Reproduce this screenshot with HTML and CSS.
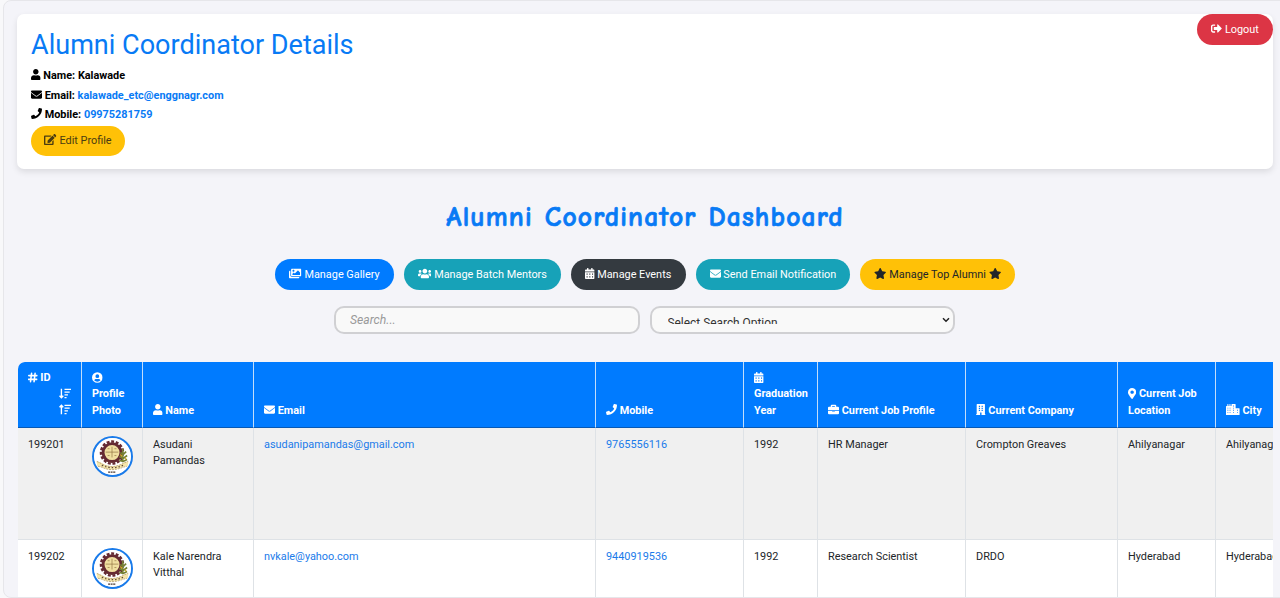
FILE: index.html
```html
<!DOCTYPE html>
<html lang="en">
<head>
<meta charset="utf-8">
<title>Alumni Coordinator Dashboard</title>
<link rel="stylesheet" href="styles.css">
</head>
<body>
<svg class="sprite" aria-hidden="true">
  <symbol id="user" viewBox="0 0 448 512"><path d="M224 256c70.7 0 128-57.3 128-128S294.7 0 224 0 96 57.3 96 128s57.3 128 128 128zm89.6 32h-16.7c-22.2 10.2-46.9 16-72.9 16s-50.6-5.8-72.9-16h-16.7C60.2 288 0 348.2 0 422.4V464c0 26.5 21.5 48 48 48h352c26.5 0 48-21.5 48-48v-41.6c0-74.2-60.2-134.4-134.4-134.4z"/></symbol>
  <symbol id="mail" viewBox="0 0 512 512"><path d="M502.3 190.8c3.9-3.1 9.7-.2 9.7 4.7V400c0 26.5-21.5 48-48 48H48c-26.5 0-48-21.5-48-48V195.6c0-5 5.7-7.8 9.7-4.7 22.4 17.4 52.1 39.5 154.1 113.6 21.1 15.4 56.7 47.8 92.2 47.6 35.7.3 72-32.8 92.3-47.6 102-74.1 131.6-96.3 154-113.7zM256 320c23.2.4 56.6-29.2 73.4-41.4 132.7-96.3 142.8-104.7 173.4-128.7 5.8-4.5 9.2-11.5 9.2-18.9v-19c0-26.5-21.5-48-48-48H48c-26.5 0-48 21.5-48 48v19c0 7.4 3.4 14.3 9.2 18.9 30.6 23.9 40.7 32.4 173.4 128.7 16.8 12.2 50.2 41.8 73.4 41.4z"/></symbol>
  <symbol id="phone" viewBox="0 0 512 512"><path d="M493.4 24.6l-104-24c-11.3-2.6-22.9 3.3-27.5 13.9l-48 112c-4.2 9.8-1.4 21.3 6.9 28l60.6 49.6c-36 76.7-98.9 140.5-177.2 177.2l-49.6-60.6c-6.8-8.3-18.2-11.1-28-6.9l-112 48C3.9 366.5-2 378.1.6 389.4l24 104C27.1 504.2 36.7 512 48 512c256.1 0 464-207.5 464-464 0-11.2-7.7-20.9-18.6-23.4z"/></symbol>
  <symbol id="edit" viewBox="0 0 576 512"><path d="M402.6 83.2l90.2 90.2c3.8 3.8 3.8 10 0 13.8L274.4 405.6l-92.8 10.3c-12.4 1.4-22.9-9.1-21.5-21.5l10.3-92.8L388.8 83.2c3.8-3.8 10-3.8 13.8 0zm162-22.9l-48.8-48.8c-15.2-15.2-39.9-15.2-55.2 0l-35.4 35.4c-3.8 3.8-3.8 10 0 13.8l90.2 90.2c3.8 3.8 10 3.8 13.8 0l35.4-35.4c15.2-15.3 15.2-40 0-55.2zM384 346.2V448H64V128h229.8c3.2 0 6.2-1.3 8.5-3.5l40-40c7.6-7.6 2.2-20.5-8.5-20.5H48C21.5 64 0 85.5 0 112v352c0 26.5 21.5 48 48 48h352c26.5 0 48-21.5 48-48V306.2c0-10.7-12.9-16-20.5-8.5l-40 40c-2.2 2.3-3.5 5.3-3.5 8.5z"/></symbol>
  <symbol id="logout" viewBox="0 0 512 512"><path d="M497 273L329 441c-15 15-41 4.5-41-17v-96H152c-13.3 0-24-10.7-24-24v-96c0-13.3 10.7-24 24-24h136V88c0-21.4 25.9-32 41-17l168 168c9.3 9.4 9.3 24.6 0 34zM192 436v-40c0-6.6-5.4-12-12-12H96c-17.7 0-32-14.3-32-32V160c0-17.7 14.3-32 32-32h84c6.6 0 12-5.4 12-12V76c0-6.6-5.4-12-12-12H96c-53 0-96 43-96 96v192c0 53 43 96 96 96h84c6.6 0 12-5.4 12-12z"/></symbol>
  <symbol id="images" viewBox="0 0 576 512"><path d="M480 416v16c0 26.500-21.500 48-48 48H48c-26.500 0-48-21.500-48-48V176c0-26.500 21.500-48 48-48h16v208c0 44.100 35.900 80 80 80h336zm96-80V80c0-26.500-21.500-48-48-48H144c-26.500 0-48 21.500-48 48v256c0 26.500 21.500 48 48 48h384c26.500 0 48-21.500 48-48zM256 128c0 26.500-21.500 48-48 48s-48-21.500-48-48 21.500-48 48-48 48 21.500 48 48zm-96 144l55.500-55.500c4.700-4.700 12.300-4.700 17 0L272 256l135.500-135.500c4.700-4.700 12.300-4.700 17 0L512 208v112H160v-48z" fill-rule="evenodd"/></symbol>
  <symbol id="users" viewBox="0 0 640 512"><path d="M96 224c35.3 0 64-28.7 64-64s-28.7-64-64-64-64 28.7-64 64 28.7 64 64 64zm448 0c35.3 0 64-28.7 64-64s-28.7-64-64-64-64 28.7-64 64 28.7 64 64 64zm32 32h-64c-17.6 0-33.5 7.1-45.1 18.6 40.3 22.1 68.9 62 75.1 109.4h66c17.7 0 32-14.3 32-32v-32c0-35.3-28.7-64-64-64zm-256 0c61.9 0 112-50.1 112-112S381.9 32 320 32 208 82.1 208 144s50.1 112 112 112zm76.8 32h-8.3c-20.8 10-43.9 16-68.5 16s-47.6-6-68.5-16h-8.3C179.6 288 128 339.6 128 403.2V432c0 26.5 21.5 48 48 48h288c26.5 0 48-21.5 48-48v-28.8c0-63.6-51.6-115.2-115.2-115.2zm-223.7-13.4C161.5 263.1 145.6 256 128 256H64c-35.3 0-64 28.7-64 64v32c0 17.7 14.3 32 32 32h65.9c6.3-47.4 34.9-87.3 75.2-109.4z"/></symbol>
  <symbol id="calendar" viewBox="0 0 448 512"><path fill-rule="evenodd" d="M0 464c0 26.500 21.500 48 48 48h352c26.500 0 48-21.500 48-48V192H0zM72 260h52v52H72zm126 0h52v52h-52zm126 0h52v52h-52zM72 388h52v52H72zm126 0h52v52h-52zm126 0h52v52h-52zM448 160v-48c0-26.500-21.500-48-48-48h-48V16q0-16-16-16h-32q-16 0-16 16v48H160V16q0-16-16-16h-32q-16 0-16 16v48H48C21.500 64 0 85.500 0 112v48z"/></symbol>
  <symbol id="star" viewBox="0 0 576 512"><path d="M259.3 17.8L194 150.2 47.9 171.5c-26.2 3.8-36.7 36.1-17.7 54.6l105.7 103-25 145.5c-4.5 26.3 23.2 46 46.4 33.7L288 439.6l130.7 68.7c23.2 12.2 50.9-7.4 46.4-33.7l-25-145.5 105.7-103c19-18.5 8.5-50.8-17.7-54.6L382 150.2 316.7 17.8c-11.7-23.6-45.6-23.9-57.4 0z"/></symbol>
  <symbol id="hash" viewBox="0 0 448 512"><path d="M166 60L118 452M330 60L282 452M36 168h390M22 344h390" fill="none" stroke="currentColor" stroke-width="72" stroke-linecap="round"/></symbol>
  <symbol id="circle-user" viewBox="0 0 496 512"><path fill-rule="evenodd" d="M248 8a248 248 0 1 0 0 496 248 248 0 1 0 0-496zm0 96a88 88 0 1 1 0 176 88 88 0 1 1 0-176zm0 344c-58.700 0-111.300-26.600-146.500-68.200C120.300 344.400 157 320 200 320c3 0 14 8 48 8s45-8 48-8c43 0 79.700 24.400 98.500 59.800C359.300 421.400 306.700 448 248 448z"/></symbol>
  <symbol id="briefcase" viewBox="0 0 512 512"><path fill-rule="evenodd" d="M128 128V80q0-48 48-48h160q48 0 48 48v48h80q48 0 48 48v112H0V176q0-48 48-48zM192 96v32h128V96zM0 320h192v16q0 16 16 16h96q16 0 16-16v-16h192v112q0 48-48 48H48q-48 0-48-48z"/></symbol>
  <symbol id="building" viewBox="0 0 448 512"><path fill-rule="evenodd" d="M32 24Q32 0 56 0h336q24 0 24 24v452h20q12 0 12 12v24H256v-112h-64v112H0v-24q0-12 12-12h20zM132 80h56v56h-56zm128 0h56v56h-56zM132 176h56v56h-56zm128 0h56v56h-56zM132 272h56v56h-56zm128 0h56v56h-56z"/></symbol>
  <symbol id="pin" viewBox="0 0 384 512"><path d="M172.3 501.7C27 291 0 269.400 0 192 0 86 86 0 192 0s192 86 192 192c0 77.400-27 99-172.300 309.700-9.500 13.700-29.900 13.700-39.400 0zM192 272c44.200 0 80-35.800 80-80s-35.800-80-80-80-80 35.800-80 80 35.800 80 80 80z"/></symbol>
  <symbol id="city" viewBox="0 0 640 512"><path fill-rule="evenodd" d="M0 120q0-24 24-24h40V16q0-16 24-16t24 16v80h48V16q0-16 24-16t24 16v80h48V24q0-24 24-24h144q24 0 24 24v168h168q24 0 24 24v272q0 24-24 24H24q-24 0-24-24zM68 172v40h40v-40zm100 0v40h40v-40zM332 72v40h40V72zm0 100v40h40v-40zM68 270v40h40v-40zm100 0v40h40v-40zm164 0v40h40v-40zM68 368v40h40v-40zm100 0v40h40v-40zm164 0v40h40v-40zm184-98v40h40v-40zm0 98v40h40v-40z"/></symbol>
  <symbol id="sort-down" viewBox="0 0 576 512"><path d="M112 32v410M24 360l88 96 88-96M256 64h304M256 192h240M256 320h160M256 448h96" fill="none" stroke="currentColor" stroke-width="64"/></symbol>
  <symbol id="sort-up" viewBox="0 0 576 512"><path d="M112 480V70M24 152l88-96 88 96M256 64h304M256 192h240M256 320h160M256 448h96" fill="none" stroke="currentColor" stroke-width="64"/></symbol>
  <symbol id="crest" viewBox="0 0 38 38">
    <circle cx="19" cy="19" r="19" fill="#fff"/>
    <circle cx="18.500" cy="15" r="11.300" fill="none" stroke="#652a32" stroke-width="2.600" stroke-dasharray="3 1.730"/>
    <circle cx="18.500" cy="15" r="9.200" fill="#f0dfa0" stroke="#652a32" stroke-width="3"/>
    <path d="M12 14.500h13M18.500 9v11M14 11h2m5 0h2M14 18h2m5 0h2" fill="none" stroke="#927443" stroke-width=".7"/>
    <path d="M29.500 11v14M27 15l3 2 3-3M26 19l4 2 4-3M26 23l4 1 4-2" fill="none" stroke="#758033" stroke-width="1.700"/>
    <path d="M27 17l2 2M32 20l1 2" stroke="#cfaa27" stroke-width="1.300"/>
    <path d="M2.500 24l4 1q12 8 25 0l4-1-1 5-4 .5q-12 6-24 0l-3-.5z" fill="#f5e6aa"/>
    <path d="M3 24l3 1.500Q18 33 31 25.500l4-1.500M4 29l4 1q10 5 22 0l4-1" fill="none" stroke="#a58a5c" stroke-width=".7" stroke-dasharray="2 1"/>
    <path d="M8 28q11 5 22 0" fill="none" stroke="#5f4638" stroke-width="1.300" stroke-dasharray="1.500 2"/>
    <path d="M14.500 35h8" stroke="#4b3a32" stroke-width="1.300" stroke-dasharray="2 .6"/>
  </symbol>
</svg>

<main class="page">
  <section class="details">
    <h2 class="details-title">Alumni Coordinator Details</h2>
    <p class="info"><svg class="icon w448"><use href="#user"/></svg> Name: Kalawade</p>
    <p class="info"><svg class="icon"><use href="#mail"/></svg> Email: <a href="#">kalawade_etc@enggnagr.com</a></p>
    <p class="info"><svg class="icon"><use href="#phone"/></svg> Mobile: <a href="#">09975281759</a></p>
    <button class="btn edit"><svg class="icon w576"><use href="#edit"/></svg> Edit Profile</button>
    <button class="btn logout"><svg class="icon"><use href="#logout"/></svg> Logout</button>
  </section>

  <h1 class="title">Alumni Coordinator Dashboard</h1>

  <nav class="actions">
    <button class="btn gallery"><svg class="icon w576"><use href="#images"/></svg> Manage Gallery</button>
    <button class="btn teal mentors"><svg class="icon w640"><use href="#users"/></svg> Manage Batch Mentors</button>
    <button class="btn dark"><svg class="icon w448"><use href="#calendar"/></svg> Manage Events</button>
    <button class="btn teal notify"><svg class="icon"><use href="#mail"/></svg> Send Email Notification</button>
    <button class="btn yellow"><svg class="icon w576"><use href="#star"/></svg> Manage Top Alumni <svg class="icon w576"><use href="#star"/></svg></button>
  </nav>

  <div class="filters">
    <input class="field" type="text" placeholder="Search...">
    <div class="field select" role="combobox" aria-label="Search option">
      <span class="select-clip"><span class="select-text">Select Search Option</span></span>
      <svg class="chevron" viewBox="0 0 8 6"><path d="M1 1.200l3 3 3-3" fill="none" stroke="#222" stroke-width="1.500"/></svg>
    </div>
  </div>

  <div class="table-wrap">
    <table class="alumni">
      <colgroup>
        <col class="c-id"><col class="c-photo"><col class="c-name"><col class="c-email"><col class="c-mobile"><col class="c-year"><col class="c-job"><col class="c-company"><col class="c-location"><col class="c-city">
      </colgroup>
      <thead>
        <tr>
          <th><svg class="icon w448"><use href="#hash"/></svg> ID<span class="sort"><svg class="icon w576"><use href="#sort-down"/></svg></span><span class="sort"><svg class="icon w576"><use href="#sort-up"/></svg></span></th>
          <th><svg class="icon w496"><use href="#circle-user"/></svg><br>Profile Photo</th>
          <th><svg class="icon w448"><use href="#user"/></svg> Name</th>
          <th><svg class="icon"><use href="#mail"/></svg> Email</th>
          <th><svg class="icon"><use href="#phone"/></svg> Mobile</th>
          <th><svg class="icon w448"><use href="#calendar"/></svg><br>Graduation Year</th>
          <th><svg class="icon"><use href="#briefcase"/></svg> Current Job Profile</th>
          <th><svg class="icon w448"><use href="#building"/></svg> Current Company</th>
          <th><svg class="icon w384"><use href="#pin"/></svg> Current Job Location</th>
          <th><svg class="icon w640"><use href="#city"/></svg> City</th>
        </tr>
      </thead>
      <tbody>
        <tr>
          <td>199201</td><td><svg class="photo"><use href="#crest"/></svg></td><td>Asudani Pamandas</td>
          <td><a href="#">asudanipamandas@gmail.com</a></td><td><a href="#">9765556116</a></td><td>1992</td>
          <td>HR Manager</td><td>Crompton Greaves</td><td>Ahilyanagar</td><td>Ahilyanagar</td>
        </tr>
        <tr>
          <td>199202</td><td><svg class="photo"><use href="#crest"/></svg></td><td>Kale Narendra Vitthal</td>
          <td><a href="#">nvkale@yahoo.com</a></td><td><a href="#">9440919536</a></td><td>1992</td>
          <td>Research Scientist</td><td>DRDO</td><td>Hyderabad</td><td>Hyderabad</td>
        </tr>
      </tbody>
    </table>
  </div>
</main>
</body>
</html>
```
FILE: styles.css
```css
* { box-sizing: border-box; }

body {
  margin: 0;
  height: 598px;
  overflow: hidden;
  background: #f8f8fa;
  color: #212529;
  font: 10.880px/16.300px Roboto, sans-serif;
}

a { color: #1a7bea; text-decoration: none; }
.sprite { display: none; }

.icon {
  width: 11px;
  height: 11px;
  fill: currentColor;
  vertical-align: -1.4px;
}
.w384 { width: 8.250px; }
.w448 { width: 9.625px; }
.w496 { width: 10.660px; }
.w576 { width: 12.375px; }
.w640 { width: 13.750px; }

.page {
  width: 1290px;
  height: 598px;
  margin-left: 3px;
  padding: 13px 19px 0 13px;
  border: 1px solid #e6e6ea;
  border-radius: 8px;
  background: #f4f4f9;
  overflow: hidden;
}

.details {
  position: relative;
  width: 1256px;
  height: 155px;
  padding: 15px 14px 14px;
  border-radius: 7px;
  background: #fff;
  box-shadow: 0 3px 6px rgba(0, 0, 0, .1);
}
.details-title {
  margin: 0 0 4px;
  color: #087af5;
  font-size: 27.050px;
  font-weight: 400;
  line-height: 33px;
}
.info {
  margin: 0;
  color: #000;
  font-weight: 700;
  line-height: 19.500px;
}
.info a { color: #087af5; }

.btn {
  height: 31px;
  padding: 0 14px;
  border: 0;
  border-radius: 16px;
  color: #fff;
  font: 10.880px/31px Roboto, sans-serif;
  white-space: nowrap;
}
.edit { display: block; width: 94px; height: 30px; margin-top: 1.500px; padding: 0; line-height: 30px; background: #ffc107; color: #4a3c12; }
.logout { position: absolute; top: 0; right: 0; width: 76px; padding: 0; background: #dc3545; }

.title {
  width: 1256px;
  margin: 30px 0 0;
  color: #087af5;
  font-family: "Comic Sans MS", "Comic Neue", Lato, sans-serif;
  font-size: 27.500px;
  font-weight: 700;
  line-height: 37px;
  letter-spacing: 1.180px;
  word-spacing: 1px;
  text-align: center;
  -webkit-text-stroke: .7px #087af5;
}

.actions { display: flex; justify-content: center; gap: 10px; width: 1256px; margin-top: 23px; }
.actions .btn { padding: 0; }
.gallery { width: 119px; background: #007bff; }
.teal { background: #17a2b8; }
.mentors { width: 156.600px; }
.notify { width: 154.700px; }
.dark { width: 115px; background: #343a40; }
.yellow { width: 154.700px; background: #ffc107; color: #212529; }

.filters { display: flex; justify-content: center; gap: 10px; width: 1255px; margin-top: 16px; }
.field {
  width: 305.500px;
  height: 28px;
  padding: 0 14px;
  border: 2px solid #d0d0d3;
  border-radius: 10px;
  background: #f9f9f9;
  color: #333;
  font: 12.200px/20px Roboto, sans-serif;
}
.field::placeholder { color: #999; font-style: italic; }
.select { display: flex; justify-content: space-between; padding: 0 3px 0 16px; font-size: 11.900px; }
.select-clip { height: 16px; overflow: hidden; }
.select-text { display: block; padding-top: 6px; line-height: 19px; }
.chevron { width: 8px; height: 6px; margin-top: 9px; }

.table-wrap { width: 1256px; height: 240px; margin-top: 28px; padding-left: 1px; border-radius: 7px 0 0; overflow: hidden; }
.alumni { width: 1318px; table-layout: fixed; border-collapse: separate; border-spacing: 0; border-radius: 7px 0 0; overflow: hidden; }
.c-id { width: 64px; }
.c-photo { width: 61px; }
.c-name { width: 111px; }
.c-email { width: 342px; }
.c-mobile { width: 148px; }
.c-year { width: 74px; }
.c-job { width: 148px; }
.c-company { width: 152px; }
.c-location { width: 98px; }
.c-city { width: 120px; }

.alumni th {
  height: 66px;
  padding: 8px 10px 8px 10px;
  border-right: 1px solid #c2ddfa;
  border-bottom: 1px solid #0759b5;
  background: #007bff;
  color: #fff;
  font-weight: 700;
  line-height: 16.300px;
  text-align: left;
  vertical-align: bottom;
}
.alumni th:nth-child(6) { padding-right: 5px; }
.alumni td {
  height: 112px;
  padding: 9px 9px 0 10px;
  border-right: 1px solid #dee2e6;
  border-bottom: 1px solid #dee2e6;
  background: #fff;
  vertical-align: top;
}
.alumni td:nth-child(2) { padding-top: 8px; }
.alumni tbody tr:first-child td { background: #f0f0f0; }
.sort { display: block; text-align: right; }
.photo { display: block; width: 41px; height: 41px; border: 2px solid #1a7bea; border-radius: 50%; }
```
